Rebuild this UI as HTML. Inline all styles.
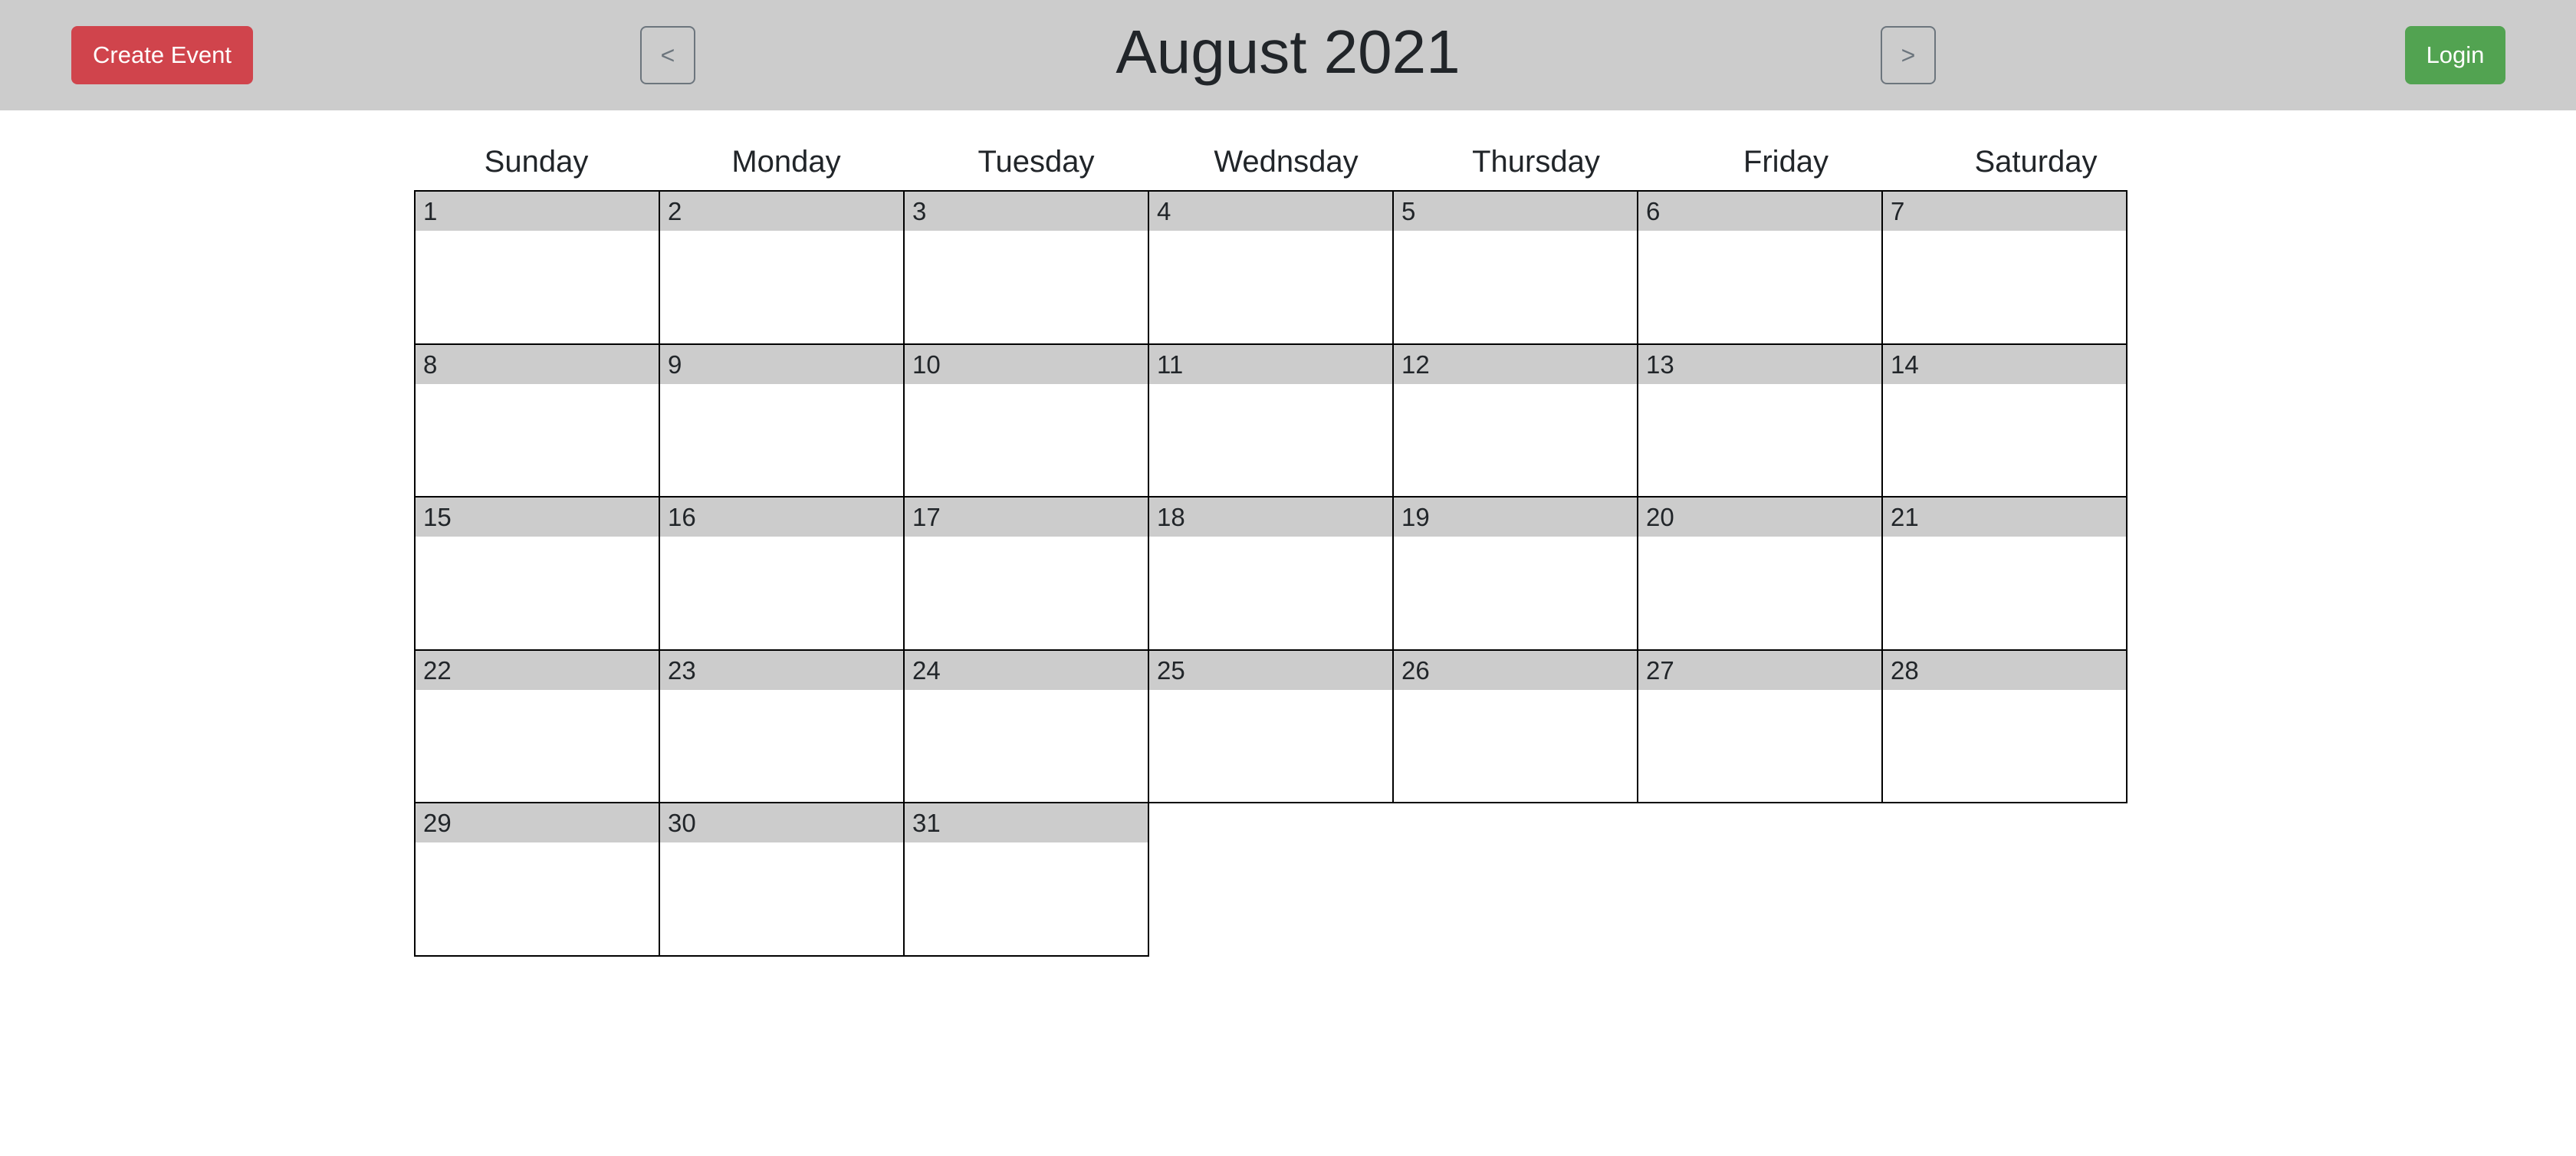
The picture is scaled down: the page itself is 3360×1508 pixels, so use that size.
<!DOCTYPE html>
<html><head><meta charset="utf-8"><style>
*{box-sizing:border-box;margin:0;padding:0}
body{width:3360px;height:1508px;background:#fff;font-family:"Liberation Sans",Arial,sans-serif;color:#212529;position:relative;overflow:hidden}
.hdr{position:absolute;left:0;top:0;width:3360px;height:144px;background:#cccccc}
.btn{position:absolute;top:34px;height:76px;border-radius:8px;color:#fff;font-size:31px;line-height:76px;text-align:center}
.nav{position:absolute;top:34px;height:76px;width:72px;border:2px solid #6c757d;border-radius:8px;color:#6c757d;font-size:32px;line-height:72px;text-align:center}
.title{position:absolute;left:0;width:3360px;top:18px;text-align:center;font-size:80px;line-height:100px}
.wd{position:absolute;top:185px;width:319px;text-align:center;font-size:40px;line-height:52px}
.c{position:absolute;width:321px;height:201.5px;border:2.5px solid #000;background:#fff}
.c div{background:#ccc;height:51px;font-size:33px;line-height:49px;padding:1px 0 0 10px}
</style></head><body>
<div class="hdr"></div>
<div class="btn" style="left:93px;width:237px;background:#d0444c">Create Event</div>
<div class="nav" style="left:835px">&lt;</div>
<div class="title">August 2021</div>
<div class="nav" style="left:2453px">&gt;</div>
<div class="btn" style="left:3137px;width:131px;background:#52a351">Login</div>
<div class="wd" style="left:540px">Sunday</div>
<div class="wd" style="left:866px">Monday</div>
<div class="wd" style="left:1192px">Tuesday</div>
<div class="wd" style="left:1518px">Wednsday</div>
<div class="wd" style="left:1844px">Thursday</div>
<div class="wd" style="left:2170px">Friday</div>
<div class="wd" style="left:2496px">Saturday</div>
<div class="c" style="left:540px;top:248px"><div>1</div></div>
<div class="c" style="left:859px;top:248px"><div>2</div></div>
<div class="c" style="left:1178px;top:248px"><div>3</div></div>
<div class="c" style="left:1497px;top:248px"><div>4</div></div>
<div class="c" style="left:1816px;top:248px"><div>5</div></div>
<div class="c" style="left:2135px;top:248px"><div>6</div></div>
<div class="c" style="left:2454px;top:248px"><div>7</div></div>
<div class="c" style="left:540px;top:447.5px"><div>8</div></div>
<div class="c" style="left:859px;top:447.5px"><div>9</div></div>
<div class="c" style="left:1178px;top:447.5px"><div>10</div></div>
<div class="c" style="left:1497px;top:447.5px"><div>11</div></div>
<div class="c" style="left:1816px;top:447.5px"><div>12</div></div>
<div class="c" style="left:2135px;top:447.5px"><div>13</div></div>
<div class="c" style="left:2454px;top:447.5px"><div>14</div></div>
<div class="c" style="left:540px;top:647px"><div>15</div></div>
<div class="c" style="left:859px;top:647px"><div>16</div></div>
<div class="c" style="left:1178px;top:647px"><div>17</div></div>
<div class="c" style="left:1497px;top:647px"><div>18</div></div>
<div class="c" style="left:1816px;top:647px"><div>19</div></div>
<div class="c" style="left:2135px;top:647px"><div>20</div></div>
<div class="c" style="left:2454px;top:647px"><div>21</div></div>
<div class="c" style="left:540px;top:846.5px"><div>22</div></div>
<div class="c" style="left:859px;top:846.5px"><div>23</div></div>
<div class="c" style="left:1178px;top:846.5px"><div>24</div></div>
<div class="c" style="left:1497px;top:846.5px"><div>25</div></div>
<div class="c" style="left:1816px;top:846.5px"><div>26</div></div>
<div class="c" style="left:2135px;top:846.5px"><div>27</div></div>
<div class="c" style="left:2454px;top:846.5px"><div>28</div></div>
<div class="c" style="left:540px;top:1046px"><div>29</div></div>
<div class="c" style="left:859px;top:1046px"><div>30</div></div>
<div class="c" style="left:1178px;top:1046px"><div>31</div></div>
</body></html>
